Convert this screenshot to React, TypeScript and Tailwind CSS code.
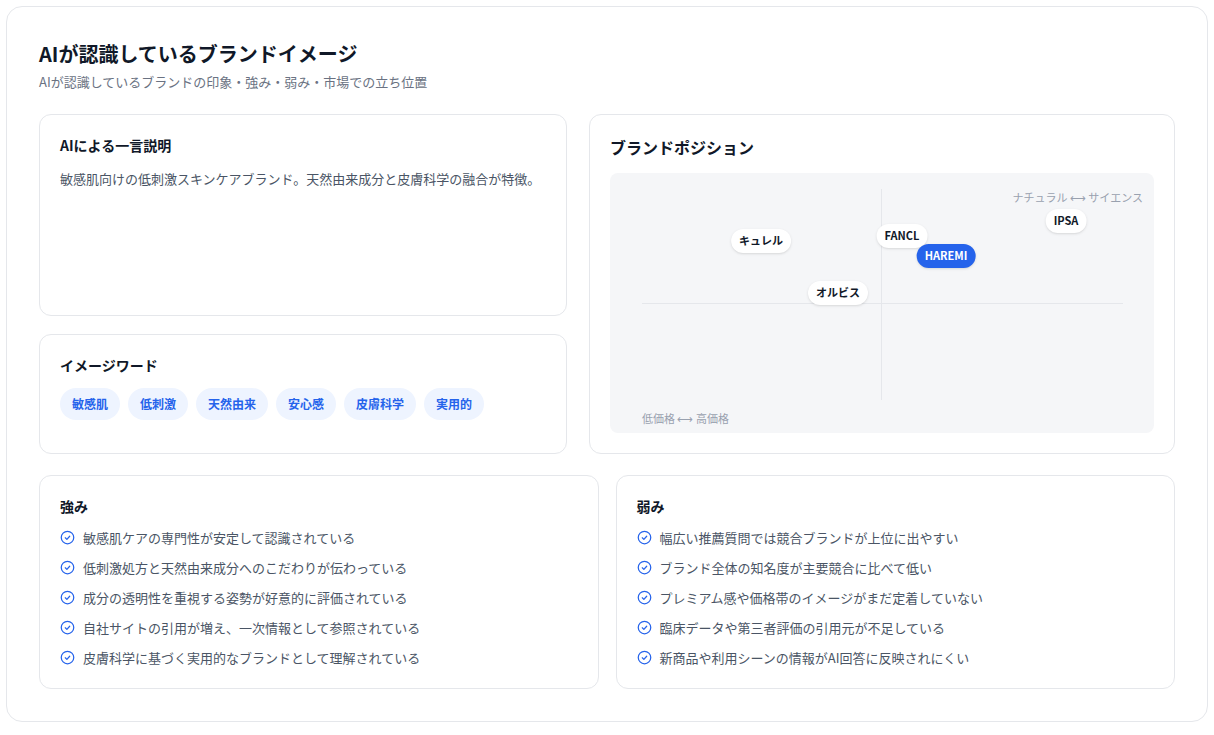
import React from 'react';

const font = { fontFamily: '"Noto Sans CJK JP", "Noto Sans", sans-serif' };

const tags = ['敏感肌', '低刺激', '天然由来', '安心感', '皮膚科学', '実用的'];
const strengths = [
    '敏感肌ケアの専門性が安定して認識されている',
    '低刺激処方と天然由来成分へのこだわりが伝わっている',
    '成分の透明性を重視する姿勢が好意的に評価されている',
    '自社サイトの引用が増え、一次情報として参照されている',
    '皮膚科学に基づく実用的なブランドとして理解されている',
];
const weaknesses = [
    '幅広い推薦質問では競合ブランドが上位に出やすい',
    'ブランド全体の知名度が主要競合に比べて低い',
    'プレミアム感や価格帯のイメージがまだ定着していない',
    '臨床データや第三者評価の引用元が不足している',
    '新商品や利用シーンの情報がAI回答に反映されにくい',
];

const CheckIcon = () => (
    <svg width="15" height="15" viewBox="0 0 24 24" fill="none" stroke="#2563eb" strokeWidth="2" strokeLinecap="round" strokeLinejoin="round">
        <circle cx="12" cy="12" r="10" />
        <path d="m8.5 12.5 2.5 2.5 4.5-5" />
    </svg>
);

const ListCard = ({ title, items }: { title: string; items: string[] }) => (
    <div className="rounded-xl border border-gray-200 bg-white px-5 pt-[20px] pb-5">
        <h3 className="text-sm font-bold text-gray-900 mb-[12px]">{title}</h3>
        <ul className="flex flex-col gap-[10px]">
            {items.map((t) => (
                <li key={t} className="flex items-center gap-2 text-[13px] leading-5 text-gray-600">
                    <CheckIcon />
                    {t}
                </li>
            ))}
        </ul>
    </div>
);

const pins = [
    { label: 'キュレル', x: 151, y: 68 },
    { label: 'FANCL', x: 292, y: 63 },
    { label: 'HAREMI', x: 336, y: 83, active: true },
    { label: 'IPSA', x: 456, y: 48 },
    { label: 'オルビス', x: 228, y: 120 },
];

export default function App() {
    return (
        <div className="min-h-screen bg-white p-[6px]" style={font}>
            <div className="rounded-2xl border border-gray-200 bg-white px-8 pt-[33px] pb-8">
                <h1 className="text-xl font-bold text-gray-900 leading-7">AIが認識しているブランドイメージ</h1>
                <p className="mt-1 text-[13px] text-gray-500">AIが認識しているブランドの印象・強み・弱み・市場での立ち位置</p>

                <div className="mt-[22px] grid grid-cols-[528px_1fr] gap-[22px]">
                    <div className="flex flex-col gap-[18px]">
                        <div className="h-[202px] rounded-xl border border-gray-200 bg-white p-5">
                            <h3 className="text-sm font-bold text-gray-900">AIによる一言説明</h3>
                            <p className="mt-[14px] text-[13px] text-gray-600">敏感肌向けの低刺激スキンケアブランド。天然由来成分と皮膚科学の融合が特徴。</p>
                        </div>
                        <div className="h-[120px] rounded-xl border border-gray-200 bg-white p-5">
                            <h3 className="text-sm font-bold text-gray-900">イメージワード</h3>
                            <div className="mt-[13px] flex gap-2">
                                {tags.map((t) => (
                                    <span key={t} className="h-8 rounded-full bg-[#eef4ff] px-3 flex items-center text-xs font-bold text-[#2563eb]">{t}</span>
                                ))}
                            </div>
                        </div>
                    </div>

                    <div className="rounded-xl border border-gray-200 bg-white px-5 pt-[20px] pb-5">
                        <h3 className="text-base font-bold text-gray-900">ブランドポジション</h3>
                        <div className="relative mt-[14px] h-[260px] rounded-lg bg-[#f5f6f8]">
                            <div className="absolute left-[271px] top-4 bottom-[33px] w-px bg-gray-200" />
                            <div className="absolute left-8 right-[31px] top-[130px] h-px bg-gray-200" />
                            <span className="absolute right-[11px] top-[16px] text-[11px] text-gray-400">ナチュラル ⟷ サイエンス</span>
                            <span className="absolute left-8 top-[237px] text-[11px] text-gray-400">低価格 ⟷ 高価格</span>
                            {pins.map((p) => (
                                <span
                                    key={p.label}
                                    className={`absolute -translate-x-1/2 -translate-y-1/2 h-6 px-2 rounded-full flex items-center text-[11px] font-bold whitespace-nowrap shadow-sm ${p.active ? 'bg-[#2563eb] text-white' : 'bg-white text-gray-900'}`}
                                    style={{ left: p.x, top: p.y }}
                                >
                                    {p.label}
                                </span>
                            ))}
                        </div>
                    </div>
                </div>

                <div className="mt-[21px] grid grid-cols-2 gap-[17px]">
                    <ListCard title="強み" items={strengths} />
                    <ListCard title="弱み" items={weaknesses} />
                </div>
            </div>
        </div>
    );
}
